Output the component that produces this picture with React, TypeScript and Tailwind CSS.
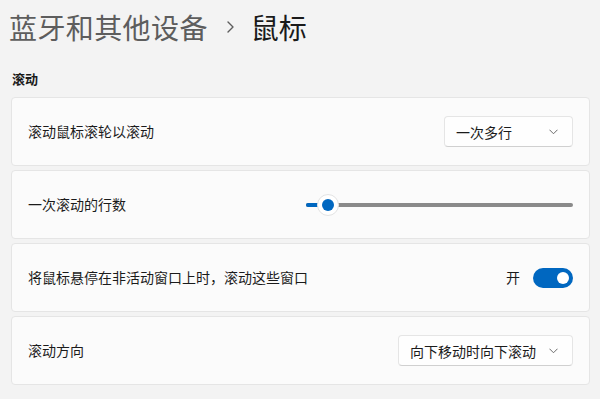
import React from "react";

const font = { fontFamily: '"Noto Sans CJK SC", "Noto Sans", sans-serif' };

function Chevron() {
  return (
    <svg width="9" height="6" viewBox="0 0 9 6" fill="none">
      <path d="M0.75 1 L4.5 4.75 L8.25 1" stroke="#6b6b6b" strokeWidth="1" strokeLinecap="round" strokeLinejoin="round" />
    </svg>
  );
}

function Card({ children }: { children: React.ReactNode }) {
  return (
    <div className="h-[69px] flex items-center justify-between px-[16px] bg-[#fbfbfb] border border-[#e5e5e5] rounded-[4px]">
      {children}
    </div>
  );
}

function Dropdown({ text, width }: { text: string; width: string }) {
  return (
    <div
      className={`${width} h-[31px] flex items-center justify-between pl-[11px] pr-[14px] bg-[#fefefe] border border-[#e5e5e5] border-b-[#d0d0d0] rounded-[4px] text-[14px] text-[#1b1b1b]`}
    >
      <span className="leading-[20px]">{text}</span>
      <Chevron />
    </div>
  );
}

export default function App() {
  return (
    <div style={font} className="w-[600px] h-[399px] bg-[#f3f3f3] overflow-hidden flex flex-col">
      <div className="pl-[9px] pt-[9px] flex items-center h-[45px] text-[28px] leading-[36px]">
        <span className="text-[#5d5d5d] tracking-[0.4px]">蓝牙和其他设备</span>
        <svg className="ml-[19px] mr-[17px]" width="7" height="12" viewBox="0 0 7 12" fill="none">
          <path d="M1 1 L6 6 L1 11" stroke="#5d5d5d" strokeWidth="1.4" strokeLinecap="round" strokeLinejoin="round" />
        </svg>
        <span className="text-[#1a1a1a]">鼠标</span>
      </div>
      <div className="pl-[12px] mt-[24px] text-[13px] font-semibold leading-[20px] text-[#1b1b1b]">滚动</div>
      <div className="mt-[8px] pl-[11px] pr-[10px] flex flex-col gap-[4px]">
        <Card>
          <span className="text-[14px] text-[#1b1b1b]">滚动鼠标滚轮以滚动</span>
          <Dropdown text="一次多行" width="w-[129px]" />
        </Card>
        <Card>
          <span className="text-[14px] text-[#1b1b1b]">一次滚动的行数</span>
          <div className="relative w-[267px] h-[22px] flex items-center">
            <div className="w-full h-[4px] rounded-full bg-[#8a8a8a]" />
            <div className="absolute left-0 top-[9px] w-[22px] h-[4px] rounded-full bg-[#0067c0]" />
            <div className="absolute left-[11px] top-0 w-[22px] h-[22px] rounded-full bg-white border border-[#e3e3e3] flex items-center justify-center">
              <div className="w-[12px] h-[12px] rounded-full bg-[#0067c0]" />
            </div>
          </div>
        </Card>
        <Card>
          <span className="text-[14px] text-[#1b1b1b]">将鼠标悬停在非活动窗口上时，滚动这些窗口</span>
          <div className="flex items-center gap-[13px]">
            <span className="text-[14px] text-[#1b1b1b]">开</span>
            <div className="w-[40px] h-[20px] rounded-full bg-[#0067c0] flex items-center justify-end pr-[4px]">
              <div className="w-[12px] h-[12px] rounded-full bg-white" />
            </div>
          </div>
        </Card>
        <Card>
          <span className="text-[14px] text-[#1b1b1b]">滚动方向</span>
          <Dropdown text="向下移动时向下滚动" width="w-[175px]" />
        </Card>
      </div>
    </div>
  );
}
